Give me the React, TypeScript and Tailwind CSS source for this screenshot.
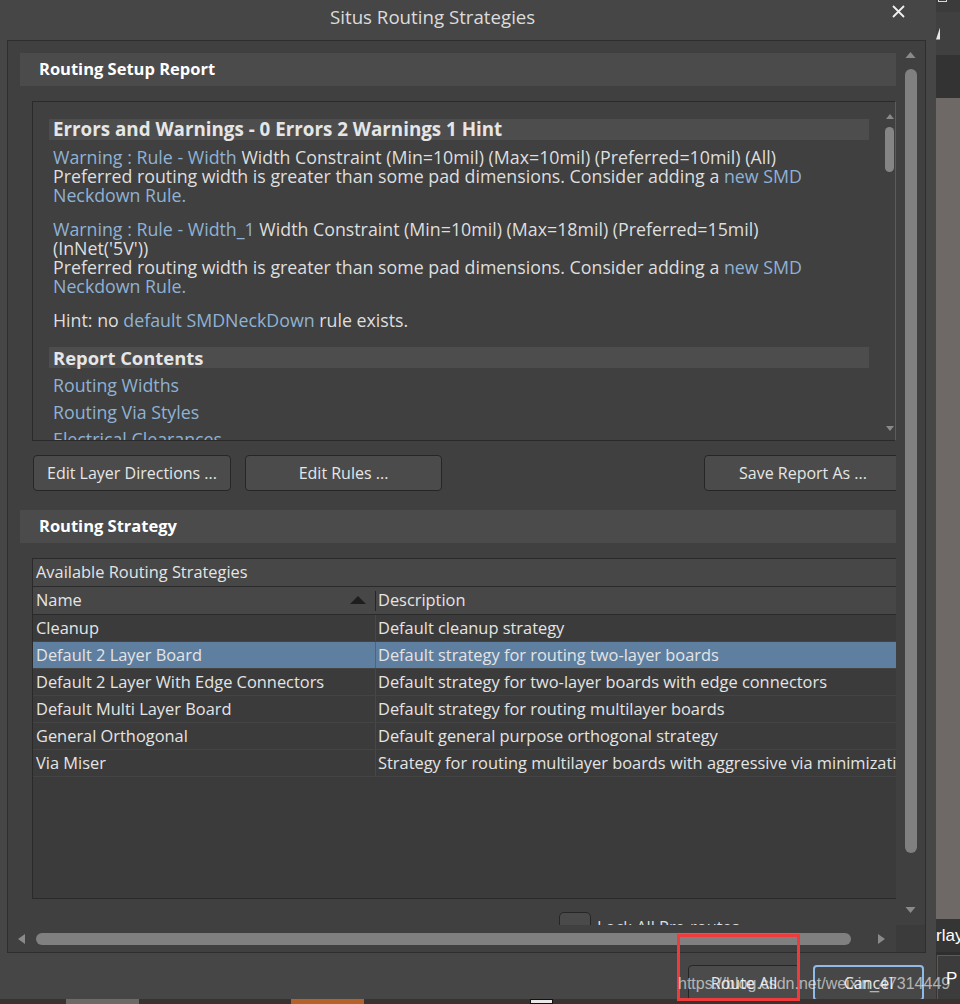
import React from 'react';

const strategies = [
  { name: 'Cleanup', desc: 'Default cleanup strategy' },
  { name: 'Default 2 Layer Board', desc: 'Default strategy for routing two-layer boards', selected: true },
  { name: 'Default 2 Layer With Edge Connectors', desc: 'Default strategy for two-layer boards with edge connectors' },
  { name: 'Default Multi Layer Board', desc: 'Default strategy for routing multilayer boards' },
  { name: 'General Orthogonal', desc: 'Default general purpose orthogonal strategy' },
  { name: 'Via Miser', desc: 'Strategy for routing multilayer boards with aggressive via minimization' },
];

const L = ({ children }: { children: React.ReactNode }) => (
  <span className="text-[#8fb2d4]">{children}</span>
);

const Arrow = ({ dir, className }: { dir: 'up' | 'down' | 'left' | 'right'; className?: string }) => {
  const pts = {
    up: '0,6 5,0 10,6',
    down: '0,0 10,0 5,6',
    left: '7,0 7,10 0,5',
    right: '0,0 0,10 7,5',
  }[dir];
  const vb = dir === 'up' || dir === 'down' ? '0 0 10 6' : '0 0 7 10';
  return (
    <svg viewBox={vb} className={className}>
      <polygon points={pts} fill="#8a8a8a" />
    </svg>
  );
};

const SectionHeader = ({ title }: { title: string }) => (
  <div className="h-[33px] w-[876px] shrink-0 bg-[#4b4b4b] pl-[19px] flex items-center text-[16.5px] font-bold text-white">
    {title}
  </div>
);

const Button = ({ label, className }: { label: string; className?: string }) => (
  <div
    className={`h-[36px] shrink-0 rounded-[4px] border border-[#262626] bg-[#4b4b4b] flex items-center justify-center text-[16px] text-[#e6e6e6] whitespace-nowrap ${className ?? ''}`}
  >
    {label}
  </div>
);

const Report = () => (
  <div className="mt-[15px] ml-[12px] w-[864px] h-[340px] shrink-0 flex border-l border-t border-b border-[#2a2a2a] border-r border-r-[#5c5c5c] bg-[#404040]">
    <div className="flex-1 overflow-hidden pl-[16px] pr-[15px] pt-[17px] text-[17.8px] text-[#dedede] leading-[19px] whitespace-nowrap">
      <div className="h-[21px] bg-[#4d4d4d] px-[4px] flex items-center font-bold text-[18.8px] text-[#e6e6e6]">
        Errors and Warnings - 0 Errors 2 Warnings 1 Hint
      </div>
      <div className="pl-[4px]">
        <div className="mt-[8px]">
          <div><L>Warning : Rule - Width</L> Width Constraint (Min=10mil) (Max=10mil) (Preferred=10mil) (All)</div>
          <div>Preferred routing width is greater than some pad dimensions. Consider adding a <L>new SMD</L></div>
          <div><L>Neckdown Rule.</L></div>
        </div>
        <div className="mt-[15px]">
          <div><L>Warning : Rule - Width_1</L> Width Constraint (Min=10mil) (Max=18mil) (Preferred=15mil)</div>
          <div>(InNet('5V'))</div>
          <div>Preferred routing width is greater than some pad dimensions. Consider adding a <L>new SMD</L></div>
          <div><L>Neckdown Rule.</L></div>
        </div>
        <div className="mt-[15px]">
          Hint: no <L>default SMDNeckDown</L> rule exists.
        </div>
      </div>
      <div className="mt-[17px] h-[21px] bg-[#4d4d4d] px-[4px] flex items-center font-bold text-[18.4px] text-[#e6e6e6]">
        Report Contents
      </div>
      <div className="pl-[4px]">
        <div className="mt-[8px]"><L>Routing Widths</L></div>
        <div className="mt-[8px]"><L>Routing Via Styles</L></div>
        <div className="mt-[8px]"><L>Electrical Clearances</L></div>
      </div>
    </div>
    <div className="w-[11px] flex flex-col items-center">
      <Arrow dir="up" className="mt-[12px] w-[8px] h-[5px]" />
      <div className="mt-[8px] w-[9px] h-[45px] rounded-full bg-[#858585]" />
      <Arrow dir="down" className="mt-[254px] w-[8px] h-[5px]" />
    </div>
  </div>
);

const StrategyTable = () => (
  <div className="mt-[15px] ml-[12px] w-[1000px] h-[341px] shrink-0 border border-[#2a2a2a] bg-[#3b3b3b] text-[16.4px] text-[#e4e4e4] whitespace-nowrap">
    <div className="h-[28px] bg-[#474747] border-b border-[#2a2a2a] pl-[3px] flex items-center">
      Available Routing Strategies
    </div>
    <div className="h-[28px] bg-[#474747] border-b border-[#2a2a2a] flex items-center">
      <div className="w-[342px] pl-[3px] pr-[9px] flex items-center justify-between">
        <span>Name</span>
        <svg viewBox="0 0 16 8" className="w-[16px] h-[8px]">
          <polygon points="0,8 8,0 16,8" fill="#1e1e1e" />
        </svg>
      </div>
      <div className="w-px h-[20px] bg-[#262626]" />
      <div className="pl-[2px]">Description</div>
    </div>
    {strategies.map((s) => (
      <div
        key={s.name}
        className={`h-[27px] flex border-b border-[#444444] ${s.selected ? 'bg-[#5e7fa0]' : ''}`}
      >
        <div className="w-[342px] pl-[3px] flex items-center">{s.name}</div>
        <div className={`w-px ${s.selected ? 'bg-[#4a6582]' : 'bg-[#474747]'}`} />
        <div className="pl-[2px] flex items-center">{s.desc}</div>
      </div>
    ))}
  </div>
);

const Dialog = () => (
  <div className="w-[936px] h-full shrink-0 bg-[#464646] flex flex-col overflow-hidden">
    {/* title bar */}
    <div className="h-[40px] shrink-0 flex items-start">
      <div className="ml-[330px] mt-[5px] text-[18.7px] leading-[24px] text-[#dcdcdc] whitespace-nowrap">Situs Routing Strategies</div>
      <svg viewBox="0 0 13 13" className="ml-auto mr-[31px] mt-[5px] w-[13px] h-[13px]">
        <path d="M1 1 L12 12 M12 1 L1 12" stroke="#f0f0f0" strokeWidth="1.8" />
      </svg>
    </div>

    {/* scrolling panel */}
    <div className="ml-[7px] w-[919px] h-[913px] shrink-0 border border-[#2e2e2e] bg-[#404040] flex flex-col">
      <div className="h-[884px] shrink-0 flex">
        <div className="w-[888px] h-full overflow-hidden pl-[12px] pt-[12px] flex flex-col">
          <SectionHeader title="Routing Setup Report" />
          <Report />
          <div className="mt-[14px] ml-[13px] flex shrink-0">
            <Button label="Edit Layer Directions ..." className="w-[198px]" />
            <Button label="Edit Rules ..." className="ml-[14px] w-[197px]" />
            <Button label="Save Report As ..." className="ml-[262px] w-[198px]" />
          </div>
          <div className="mt-[19px] shrink-0">
            <SectionHeader title="Routing Strategy" />
          </div>
          <StrategyTable />
          <div className="mt-[13px] ml-[539px] flex items-start shrink-0">
            <div className="w-[32px] h-[30px] rounded-[5px] border border-[#262626] bg-[#4a4a4a]" />
            <div className="ml-[6px] mt-[3px] text-[16.4px] leading-[24px] text-[#dedede] whitespace-nowrap">Lock All Pre-routes</div>
          </div>
        </div>
        <div className="w-[29px] flex flex-col items-center">
          <Arrow dir="up" className="mt-[11px] w-[11px] h-[6px]" />
          <div className="mt-[11px] w-[12px] h-[784px] rounded-full bg-[#808080]" />
          <Arrow dir="down" className="mt-[54px] w-[11px] h-[6px]" />
        </div>
      </div>
      <div className="h-[27px] shrink-0 flex items-center">
        <Arrow dir="left" className="ml-[10px] w-[7px] h-[10px]" />
        <div className="ml-[11px] w-[815px] h-[12px] rounded-full bg-[#808080]" />
        <Arrow dir="right" className="ml-[27px] w-[7px] h-[10px]" />
        <div className="ml-auto w-[29px] h-full bg-[#3b3b3b]" />
      </div>
    </div>

    {/* dialog buttons */}
    <div className="flex-1 flex items-start overflow-hidden">
      <Button label="Route All" className="ml-[688px] mt-[12px] w-[112px]" />
      <div className="ml-[13px] mt-[12px] w-[111px] h-[36px] shrink-0 rounded-[4px] border-2 border-[#8fbbe6] bg-[#474747] flex items-center justify-center text-[16px] text-[#e6e6e6]">
        Cancel
      </div>
    </div>
  </div>
);

const SideStrip = () => (
  <div className="w-[24px] h-full flex flex-col overflow-hidden font-['Liberation_Sans',sans-serif]">
    <div className="h-[12px] shrink-0 bg-[#3b3b3b] flex">
      <div className="ml-[2px] w-[9px] h-[2px] border-b border-l border-r border-[#d8d8d8]" />
    </div>
    <div className="h-[43px] shrink-0 bg-[#404040] flex items-center">
      <div className="w-[4px] h-[12px] bg-[#e8e8e8] [clip-path:polygon(0_100%,100%_0,100%_100%)]" />
    </div>
    <div className="h-[43px] shrink-0 bg-[#333333]" />
    <div className="flex-1 bg-[#6e6966]" />
    <div className="h-[33px] shrink-0 bg-[#353535] flex items-center text-[17px] text-white leading-none whitespace-nowrap">rlay</div>
    <div className="h-[3px] shrink-0 bg-[#2e2e2e]" />
    <div className="h-[44px] shrink-0 bg-[#3c3c3c] border-l border-t border-[#5a5a5a] ml-[1px] pl-[8px] pt-[14px] text-[17px] text-white leading-none">P</div>
  </div>
);

export default function App() {
  return (
    <div className="relative w-[960px] h-[1004px] overflow-hidden flex flex-col bg-[#3a3230] font-['Open_Sans',sans-serif]">
      <div className="flex h-[999px] shrink-0">
        <Dialog />
        <SideStrip />
      </div>
      {/* taskbar fragment */}
      <div className="flex-1 flex">
        <div className="ml-[66px] w-[73px] bg-[#6e6966]" />
        <div className="ml-[152px] w-[73px] bg-[#b5622a]" />
        <div className="ml-[166px] w-[23px] bg-[#e8e8e8] border border-[#111]" />
      </div>

      {/* screenshot annotation + watermark */}
      <div className="absolute left-[677px] top-[934px] w-[123px] h-[67px] border-[3px] border-[#ee3b3b]" />
      <div className="absolute left-[678px] top-[974px] text-[16px] leading-[20px] text-white/60 font-['Liberation_Sans',sans-serif] whitespace-nowrap">
        https://blog.csdn.net/weixin_47314449
      </div>
    </div>
  );
}
